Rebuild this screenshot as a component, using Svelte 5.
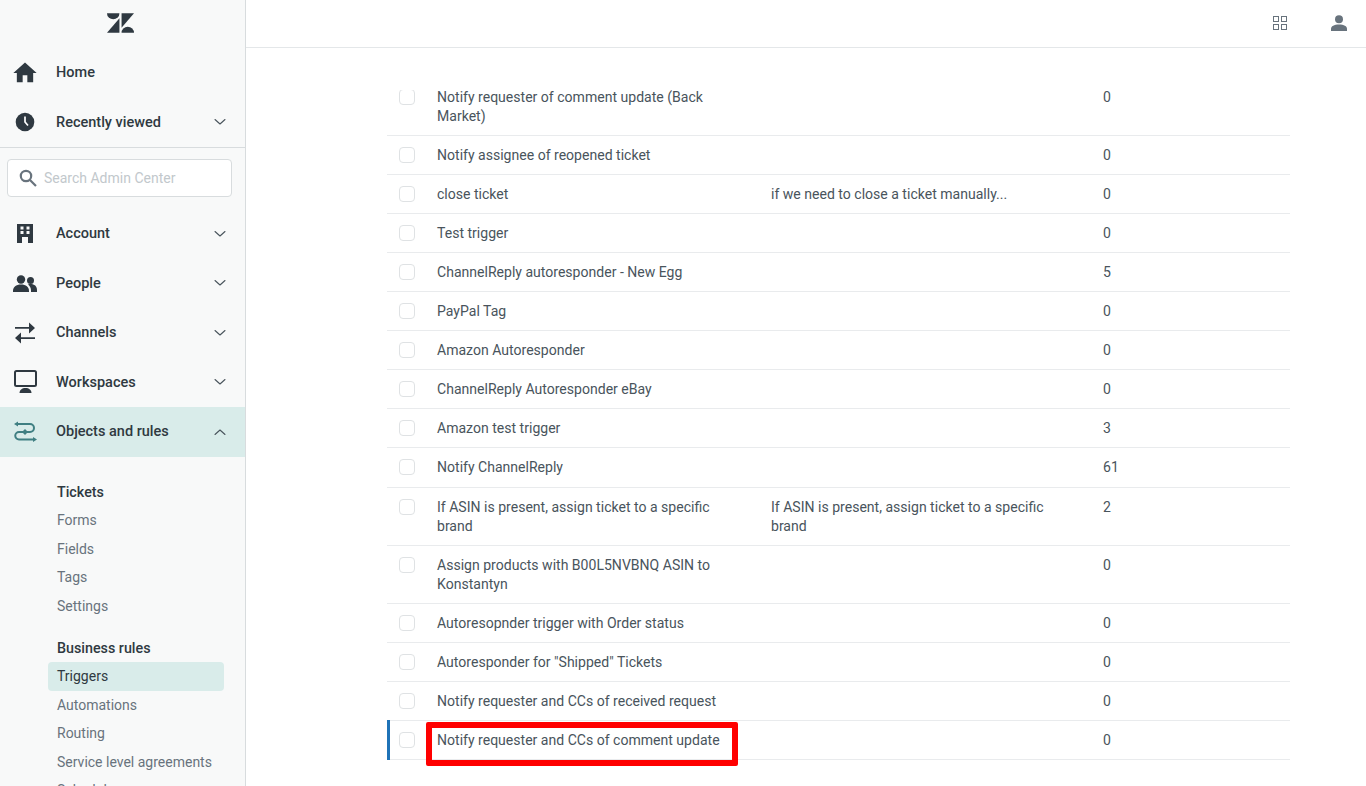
<script>
  const rows = [
    { name: 'Notify requester of comment update (Back Market)', desc: '', count: 0 },
    { name: 'Notify assignee of reopened ticket', desc: '', count: 0 },
    { name: 'close ticket', desc: 'if we need to close a ticket manually...', count: 0 },
    { name: 'Test trigger', desc: '', count: 0 },
    { name: 'ChannelReply autoresponder - New Egg', desc: '', count: 5 },
    { name: 'PayPal Tag', desc: '', count: 0 },
    { name: 'Amazon Autoresponder', desc: '', count: 0 },
    { name: 'ChannelReply Autoresponder eBay', desc: '', count: 0 },
    { name: 'Amazon test trigger', desc: '', count: 3 },
    { name: 'Notify ChannelReply', desc: '', count: 61 },
    { name: 'If ASIN is present, assign ticket to a specific brand', desc: 'If ASIN is present, assign ticket to a specific brand', count: 2 },
    { name: 'Assign products with B00L5NVBNQ ASIN to Konstantyn', desc: '', count: 0 },
    { name: 'Autoresopnder trigger with Order status', desc: '', count: 0 },
    { name: 'Autoresponder for "Shipped" Tickets', desc: '', count: 0 },
    { name: 'Notify requester and CCs of received request', desc: '', count: 0 },
    { name: 'Notify requester and CCs of comment update', desc: '', count: 0, current: true }
  ];
  const ticketLinks = ['Forms', 'Fields', 'Tags', 'Settings'];
  const ruleLinks = ['Triggers', 'Automations', 'Routing', 'Service level agreements', 'Schedules'];
</script>

{#snippet chevron(up)}
  <svg class="chev" viewBox="0 0 12 8" width="12" height="8" fill="none" stroke="currentColor" stroke-width="1.1" stroke-linecap="round" stroke-linejoin="round">
    {#if up}<path d="M1 6.5 6 2l5 4.5" />{:else}<path d="M1 1.5 6 6l5-4.5" />{/if}
  </svg>
{/snippet}

<div class="app">
  <aside class="side">
    <div class="logo">
      <svg viewBox="0 0 26 19" width="27" height="20" fill="#2f3941">
        <path d="M0 0H12A6 6 0 0 1 0 0Z" />
        <path d="M12 5V19H0Z" />
        <path d="M14 14V0H26Z" />
        <path d="M14 19A6 6 0 0 1 26 19Z" />
      </svg>
    </div>

    <div class="item">
      <span class="ic"><svg viewBox="0 0 24 24" width="28" height="28" fill="#2f3941"><path d="M10 20v-6h4v6h5v-8h3L12 3 2 12h3v8z" /></svg></span>
      <span class="lbl">Home</span>
    </div>
    <div class="item">
      <span class="ic"><svg viewBox="0 0 20 20" width="20" height="20"><circle cx="10" cy="10" r="9.3" fill="#2f3941" /><path d="M10 4.500V10l3 3.500" fill="none" stroke="#fff" stroke-width="1.700" /></svg></span>
      <span class="lbl">Recently viewed</span>
      {@render chevron(false)}
    </div>

    <div class="searchwrap">
      <div class="search">
        <svg viewBox="0 0 18 18" width="18" height="18" fill="none" stroke="#68737d" stroke-width="2.200"><circle cx="7" cy="7" r="5.200" /><path d="M11 11l6 6" /></svg>
        <span class="ph">Search Admin Center</span>
      </div>
    </div>

    <div class="item">
      <span class="ic"><svg viewBox="0 0 16 19" width="16" height="19" fill="#2f3941"><path fill-rule="evenodd" d="M0 0h16v19h-5v-6H5v6H0zM3.500 2.500v3h3v-3zM9.500 2.500v3h3v-3zM3.500 7v3h3V7zM9.500 7v3h3V7z" /></svg></span>
      <span class="lbl">Account</span>
      {@render chevron(false)}
    </div>
    <div class="item">
      <span class="ic"><svg viewBox="0 0 24 17" width="24" height="17" fill="#2f3941"><circle cx="8" cy="4.500" r="4.200" /><circle cx="17.500" cy="5.500" r="3.500" /><path d="M0 16c0-4 3-6.500 8-6.500s8 2.500 8 6.500v1H0z" /><path d="M15 9.500c1-.3 1.800-.4 2.500-.4 4 0 6.500 2.200 6.500 5.900v2h-6v-1.500c0-2.500-1-4.500-3-6z" /></svg></span>
      <span class="lbl">People</span>
      {@render chevron(false)}
    </div>
    <div class="item">
      <span class="ic"><svg viewBox="0 0 22 22" width="22" height="22" fill="#2f3941"><path d="M1 5h14V6.800H1zM15 .5 21 6l-6 5.500zM7 15.200h14V17H7zM7 10.500V21.500L1 16z" /></svg></span>
      <span class="lbl">Channels</span>
      {@render chevron(false)}
    </div>
    <div class="item">
      <span class="ic"><svg viewBox="0 0 23 24" width="23" height="24" fill="#2f3941"><rect x="1" y="1" width="21" height="15" rx="1.500" fill="none" stroke="#2f3941" stroke-width="2" /><path d="M5.500 23c0-3 2.500-5 6-5s6 2 6 5z" /></svg></span>
      <span class="lbl">Workspaces</span>
      {@render chevron(false)}
    </div>
    <div class="item active">
      <span class="ic"><svg viewBox="0 0 24 24" width="24" height="24" fill="none" stroke="#3f7f82" stroke-width="2"><path d="M4 4h13a4 4 0 0 1 0 8H6a3.750 3.750 0 0 0 0 7.500h14" /><path d="M5 1.500v5L1 4zM20 17v5l4-2.500z" fill="#3f7f82" stroke="none" /><path d="M12 9l3 3-3 3-3-3z" fill="#3f7f82" stroke="none" /></svg></span>
      <span class="lbl">Objects and rules</span>
      {@render chevron(true)}
    </div>

    <nav class="sub">
      <div class="head">Tickets</div>
      {#each ticketLinks as l}<div class="link">{l}</div>{/each}
      <div class="head second">Business rules</div>
      {#each ruleLinks as l, i}<div class="link" class:on={i === 0}>{l}</div>{/each}
    </nav>
  </aside>

  <div class="right">
    <header class="top">
      <svg class="apps" viewBox="0 0 14 14" width="14" height="14" fill="none" stroke="#68737d"><rect x=".5" y=".5" width="5" height="5" /><rect x="8.500" y=".5" width="5" height="5" /><rect x=".5" y="8.500" width="5" height="5" /><rect x="8.500" y="8.500" width="5" height="5" /></svg>
      <svg class="user" viewBox="0 0 16 16" width="16" height="16" fill="#68737d"><circle cx="8" cy="4.200" r="4" /><path d="M0 16v-2c0-3 3-4.500 8-4.500s8 1.500 8 4.500v2z" /></svg>
    </header>
    <main class="main">
      <div class="table">
        {#each rows as r}
          <div class="row" class:current={r.current}>
            <span class="box"></span>
            <div class="name">{#if r.current}<span class="mark"></span>{/if}{r.name}</div>
            <div class="desc">{r.desc}</div>
            <div class="count">{r.count}</div>
          </div>
        {/each}
      </div>
    </main>
  </div>
</div>

<style>
  :global(body) { margin: 0; background: #fff; }
  .app { display: flex; width: 1366px; height: 786px; overflow: hidden; font-family: Roboto, "Liberation Sans", sans-serif; color: #2f3941; }
  .side { width: 245px; flex: none; background: #f8f9f9; border-right: 1px solid #d8dcde; overflow: hidden; box-sizing: content-box; }
  .logo { height: 46px; display: flex; align-items: center; justify-content: center; padding-right: 5px; margin-bottom: 2px; }
  .item { height: 49.500px; display: flex; align-items: center; font-size: 14.500px; font-weight: 500; color: #2f3941; }
  .item.active { background: #d9ecea; }
  .ic { width: 50px; display: flex; justify-content: center; flex: none; }
  .lbl { margin-left: 6px; flex: 1; }
  .chev { margin-right: 19px; color: #49545c; }
  .searchwrap { border-top: 1px solid #d8dcde; padding: 11px 13.500px 12px 7px; }
  .search { height: 36px; border: 1px solid #d8dcde; border-radius: 4px; background: #fff; display: flex; align-items: center; padding-left: 11px; gap: 7px; }
  .ph { font-size: 14px; color: #c2c8cc; }
  .sub { padding: 21px 21px 0 48px; }
  .head { height: 28.500px; line-height: 28.500px; padding-left: 9px; font-size: 14.300px; font-weight: 500; color: #2f3941; }
  .head.second { margin-top: 13.500px; line-height: 29.500px; }
  .link { height: 28.500px; line-height: 28.500px; padding-left: 9px; font-size: 14px; color: #68737d; border-radius: 4px; white-space: nowrap; }
  .link.on { background: #d9ecea; color: #2f3941; }
  .right { flex: 1; min-width: 0; display: flex; flex-direction: column; }
  .top { height: 47px; flex: none; border-bottom: 1px solid #e4e7e9; display: flex; align-items: center; justify-content: flex-end; padding-right: 19px; gap: 44px; box-sizing: content-box; }
  .apps { margin-top: -1px; }
  .user { margin-top: -1px; }
  .main { flex: 1; margin-top: 42px; padding: 0 76px 0 141px; overflow: hidden; }
  .table { margin-top: -12px; font-size: 14.050px; line-height: 19.050px; color: #49545c; }
  .row { display: grid; grid-template-columns: 50px 334px 332px 1fr; padding: 10px 0 9px; border-bottom: 1px solid #e9ebed; position: relative; }
  .row.current::before { content: ""; position: absolute; left: 0; top: -1px; bottom: -1px; width: 3px; background: #1f73b7; }
  .box { width: 14px; height: 14px; margin: 1px 0 0 12px; border: 1px solid #dfe2e4; border-radius: 4px; background: #fff; }
  .name { padding-right: 30px; position: relative; }
  .desc { padding-right: 30px; }
  .mark { position: absolute; left: -11px; top: -9px; width: 300px; height: 32px; border: 6px solid #f00; border-radius: 2px; pointer-events: none; }
</style>
